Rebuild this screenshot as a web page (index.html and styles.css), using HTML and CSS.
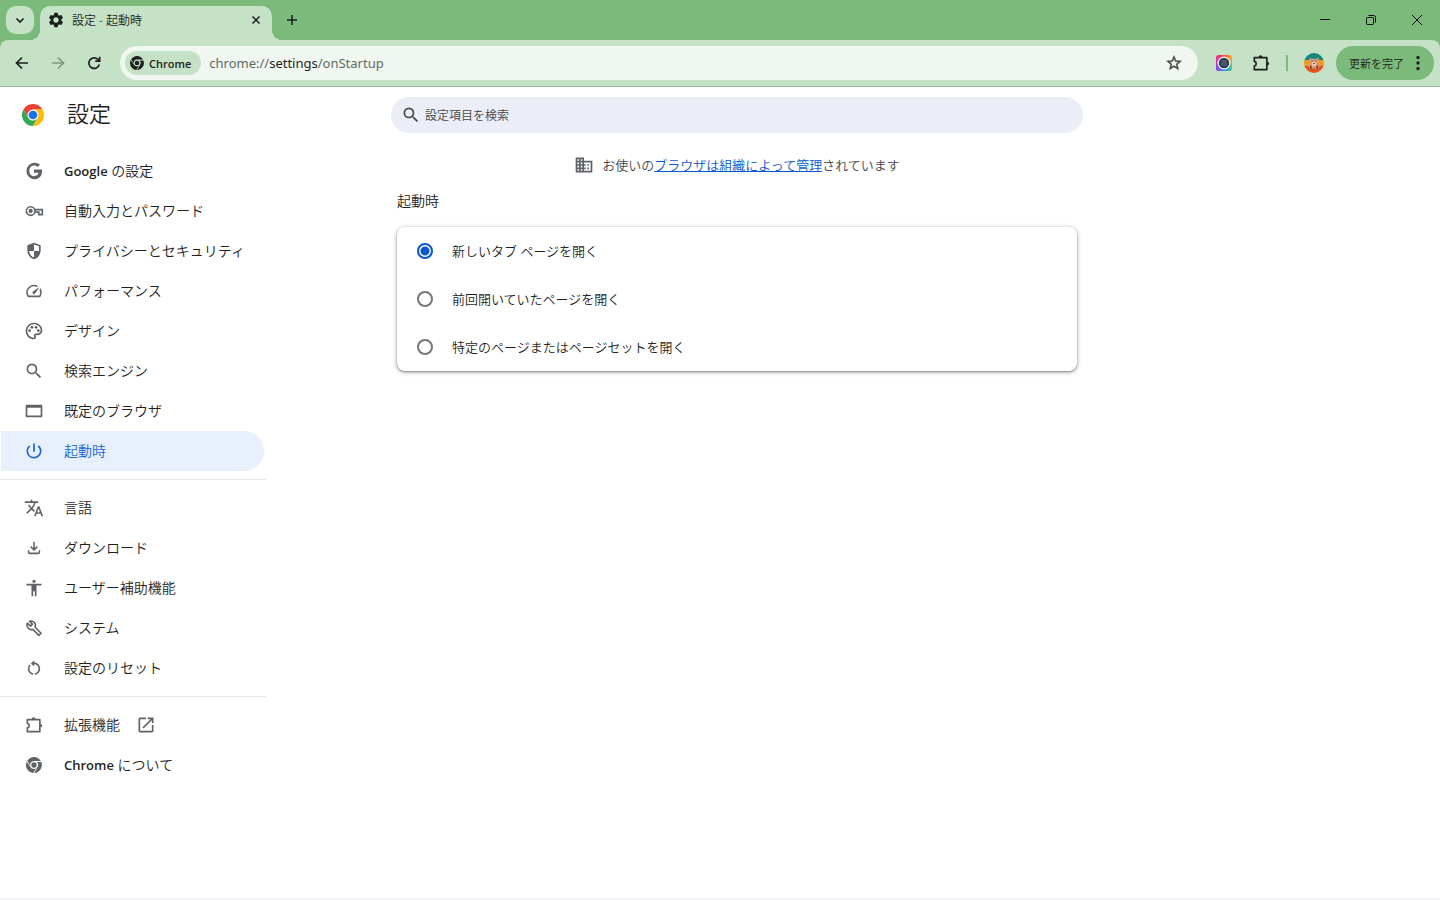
FILE: index.html
```html
<!DOCTYPE html>
<html lang="ja">
<head>
<meta charset="utf-8">
<title>設定 - 起動時</title>
<link rel="stylesheet" href="styles.css">
</head>
<body>

<!-- shared symbols -->
<svg class="defs" aria-hidden="true">
  <symbol id="chrome-mono" viewBox="0 0 24 24">
    <circle cx="12" cy="12" r="4"/>
    <path d="M12 6h10.300A12 12 0 0 0 1.900 5.600L6.700 13.600A5.500 5.500 0 0 1 12 6z"/>
    <path d="M1.100 7A12 12 0 0 0 10.900 23.950L15.300 16.600A5.700 5.700 0 0 1 6.900 15.200z"/>
    <path d="M16.200 7.500A5.900 5.900 0 0 1 17 15.400L12.400 24A12 12 0 0 0 22.900 7.500z"/>
  </symbol>
  <symbol id="extension" viewBox="0 0 24 24">
    <path d="M4 5.500h15V20H4v-4.500a2.800 2.800 0 0 0 0-5.500z" fill="none" stroke="currentColor" stroke-width="2" stroke-linejoin="round"/>
    <path d="M9.200 5a2.300 2.300 0 0 1 4.600 0zM19.500 10.400a2.300 2.300 0 0 1 0 4.600z"/>
  </symbol>
  <symbol id="search" viewBox="0 0 24 24">
    <path d="M15.500 14h-.79l-.28-.27A6.471 6.471 0 0 0 16 9.500 6.500 6.500 0 1 0 9.500 16c1.610 0 3.090-.59 4.230-1.570l.27.28v.79l5 4.990L20.490 19l-4.990-5zm-6 0C7.010 14 5 11.990 5 9.500S7.010 5 9.500 5 14 7.010 14 9.500 11.990 14 9.500 14z"/>
  </symbol>
</svg>

<header class="browser">
  <div class="tab-strip">
    <button class="tab-search" aria-label="タブを検索">
      <svg viewBox="0 0 12 12" width="12" height="12"><path d="M2.500 4.500 6 8l3.500-3.500" class="line bold"/></svg>
    </button>
    <div class="tab">
      <svg class="tab-icon" viewBox="0 0 24 24" width="18" height="18"><path d="M19.140 12.940c.04-.3.060-.61.060-.94 0-.32-.02-.64-.07-.94l2.030-1.580c.18-.14.230-.41.120-.61l-1.920-3.320c-.12-.22-.37-.29-.59-.22l-2.390.96c-.5-.38-1.030-.7-1.620-.94l-.36-2.540c-.04-.24-.24-.41-.48-.41h-3.840c-.24 0-.43.17-.47.41l-.36 2.540c-.59.24-1.130.57-1.620.94l-2.390-.96c-.22-.08-.47 0-.59.22L2.740 8.870c-.12.21-.08.47.12.61l2.030 1.580c-.05.3-.09.63-.09.94s.02.64.07.94l-2.030 1.580c-.18.14-.23.41-.12.61l1.920 3.320c.12.22.37.29.59.22l2.390-.96c.5.38 1.030.7 1.620.94l.36 2.540c.05.24.24.41.48.41h3.840c.24 0 .44-.17.47-.41l.36-2.540c.59-.24 1.130-.56 1.620-.94l2.390.96c.22.08.47 0 .59-.22l1.920-3.320c.12-.22.070-.47-.12-.61l-2.010-1.580zM12 15.600c-1.980 0-3.600-1.620-3.600-3.600s1.620-3.600 3.600-3.600 3.600 1.620 3.600 3.600-1.620 3.600-3.600 3.600z"/></svg>
      <span class="tab-title">設定 - 起動時</span>
      <button class="tab-close" aria-label="閉じる">
        <svg viewBox="0 0 10 10" width="10" height="10"><path d="M1.500 1.500l7 7M8.500 1.500l-7 7" class="line mid"/></svg>
      </button>
    </div>
    <button class="new-tab" aria-label="新しいタブ">
      <svg viewBox="0 0 12 12" width="12" height="12"><path d="M6 1v10M1 6h10" class="line mid"/></svg>
    </button>
    <div class="window-buttons">
      <button aria-label="最小化"><svg viewBox="0 0 12 12" width="12" height="12"><path d="M1 5.500h10" class="line"/></svg></button>
      <button aria-label="元に戻す"><svg viewBox="0 0 12 12" width="12" height="12"><rect x="1.500" y="3.500" width="7" height="7" rx="1" class="line"/><path d="M3.500 1.500h5a2 2 0 0 1 2 2v5" class="line"/></svg></button>
      <button aria-label="閉じる"><svg viewBox="0 0 12 12" width="12" height="12"><path d="M1 1l10 10M11 1L1 11" class="line"/></svg></button>
    </div>
  </div>

  <div class="toolbar">
    <div class="nav-buttons">
      <button aria-label="戻る"><svg viewBox="0 0 16 16" width="16" height="16"><path d="M14 8H3M8 2.500L2.500 8 8 13.500" class="line bold"/></svg></button>
      <button aria-label="進む" disabled><svg viewBox="0 0 16 16" width="16" height="16"><path d="M2 8h11M8 2.500L13.500 8 8 13.500" class="line bold"/></svg></button>
      <button aria-label="再読み込み"><svg viewBox="0 0 16 16" width="16" height="16"><path d="M13.300 9.500A5.300 5.300 0 1 1 12 4.400L13.500 5.800M13.700 1.800v4.400H9.300" class="line bold"/></svg></button>
    </div>
    <div class="omnibox">
      <button class="chip"><svg width="14" height="14"><use href="#chrome-mono"/></svg>Chrome</button>
      <span class="url">chrome://<b>settings</b>/onStartup</span>
      <button class="star" aria-label="ブックマーク"><svg viewBox="0 0 24 24" width="18" height="18"><path d="M22 9.240l-7.190-.62L12 2 9.190 8.630 2 9.240l5.460 4.730L5.820 21 12 17.270 18.180 21l-1.630-7.030L22 9.240zM12 15.400l-3.760 2.270 1-4.280-3.320-2.880 4.380-.38L12 6.100l1.710 4.040 4.380.38-3.320 2.880 1 4.280L12 15.400z" stroke="currentColor" stroke-width=".5"/></svg></button>
    </div>
    <div class="actions">
      <button aria-label="カメラ">
        <svg viewBox="0 0 16 16" width="16" height="16">
          <defs><linearGradient id="cam-top"><stop offset="0" stop-color="#e52ca4"/><stop offset=".5" stop-color="#f5473a"/><stop offset="1" stop-color="#ffb31a"/></linearGradient>
          <linearGradient id="cam-bottom"><stop offset="0" stop-color="#9c3df0"/><stop offset=".5" stop-color="#2f8df5"/><stop offset="1" stop-color="#35d48c"/></linearGradient>
          <linearGradient id="cam-fade" x1="0" y1="0" x2="0" y2="1"><stop offset=".2" stop-color="#000"/><stop offset=".8" stop-color="#fff"/></linearGradient>
          <mask id="cam-mask"><rect width="16" height="16" fill="url(#cam-fade)"/></mask></defs>
          <rect width="16" height="16" rx="3" fill="url(#cam-top)"/>
          <rect width="16" height="16" rx="3" fill="url(#cam-bottom)" mask="url(#cam-mask)"/>
          <circle cx="8" cy="8" r="6.500" fill="#fff"/><circle cx="8" cy="8" r="5.200" fill="#26384b"/><circle cx="8" cy="8" r="3.500" fill="#46566a"/>
        </svg>
      </button>
      <button aria-label="拡張機能"><svg width="20" height="20"><use href="#extension"/></svg></button>
      <span class="split"></span>
      <button class="profile" aria-label="プロフィール">
        <svg viewBox="0 0 20 20" width="20" height="20">
          <defs><clipPath id="round"><circle cx="10" cy="10" r="10"/></clipPath></defs>
          <g clip-path="url(#round)">
            <path fill="#16857b" d="M0 0h20v8H0z"/><path fill="#f29a16" d="M0 7h20v6H0z"/><path fill="#e8501e" d="M0 13h20v7H0z"/>
            <path fill="#d29b80" d="M5.500 4.500l2 1.200h5l2-1.200.3 2.500-.8 2 1.500 3-1 3.500h-9l-1-3.500 1.500-3-.8-2z"/>
            <path fill="#6b4136" d="M6 12.500h1.500V16H6zM12.500 12.500H14V16h-1.500zM7.500 7.500h1v1h-1zM11.500 7.500h1v1h-1z"/>
            <path fill="#edc5ac" d="M8 9h4v4H8z"/><path fill="#8d5447" d="M9 10h2v1H9z"/>
          </g>
        </svg>
      </button>
      <button class="update">更新を完了<svg viewBox="0 0 4 16" width="4" height="16"><circle cx="2" cy="2.500" r="1.700"/><circle cx="2" cy="8" r="1.700"/><circle cx="2" cy="13.500" r="1.700"/></svg></button>
    </div>
  </div>
</header>

<div class="settings">
  <aside class="sidebar">
    <div class="brand">
      <svg viewBox="0 0 48 48" width="22" height="22">
        <path fill="#ea4335" d="M24 12h20.800A24 24 0 0 0 3.200 12l10.400 18L24 12z"/>
        <path fill="#34a853" d="M34.400 30L24 48A24 24 0 0 1 3.200 12l10.400 18z"/>
        <path fill="#fbbc04" d="M24 12h20.800A24 24 0 0 1 24 48l10.400-18z"/>
        <circle cx="24" cy="24" r="12" fill="#fff"/><circle cx="24" cy="24" r="9.500" fill="#1a73e8"/>
      </svg>
      <h1>設定</h1>
    </div>
    <nav class="menu">
      <a href="#google"><svg viewBox="0 0 24 24"><path d="M12 5.500c1.700 0 3.200.6 4.400 1.700l2.900-2.900A10 10 0 1 0 12 22c5.800 0 9.700-4.100 9.700-9.800 0-.7-.1-1.300-.2-1.900H12v3.900h5.500c-.5 2.400-2.500 4-5.500 4a6.400 6.400 0 0 1 0-12.700z"/></svg><span><b>Google</b> の設定</span></a>
      <a href="#autofill"><svg viewBox="0 0 24 24"><circle cx="8" cy="12" r="5.200" fill="none" stroke="currentColor" stroke-width="1.900"/><circle cx="8" cy="12" r="2.600"/><path d="M13 10.300h9v6h-4.200v-3h-4.800" fill="none" stroke="currentColor" stroke-width="1.900"/></svg><span>自動入力とパスワード</span></a>
      <a href="#privacy"><svg viewBox="0 0 24 24"><path d="M12 2L4 5v6.090c0 5.050 3.410 9.760 8 10.910 4.590-1.150 8-5.860 8-10.910V5l-8-3zm6 9.090c0 .31-.01.610-.04.910H12V4.140l6 2.250v4.700zM12 19.930c-2.990-1-5.290-4.210-5.850-7.930H12v7.930z"/></svg><span>プライバシーとセキュリティ</span></a>
      <a href="#performance"><svg viewBox="-1 -1 26 26"><path d="M20.380 8.570l-1.230 1.850a8 8 0 0 1-.22 7.580H5.070A8 8 0 0 1 15.580 6.850l1.850-1.230A10 10 0 0 0 3.350 19a2 2 0 0 0 1.720 1h13.850a2 2 0 0 0 1.740-1 10 10 0 0 0-.27-10.440zm-9.790 6.840a2 2 0 0 0 2.830 0l5.660-8.490-8.490 5.660a2 2 0 0 0 0 2.830z"/></svg><span>パフォーマンス</span></a>
      <a href="#appearance"><svg viewBox="0 0 24 24"><path d="M12 22C6.490 22 2 17.510 2 12S6.490 2 12 2s10 4.040 10 9c0 3.310-2.690 6-6 6h-1.770c-.28 0-.5.220-.5.500 0 .12.050.23.130.33.410.47.640 1.060.640 1.670A2.500 2.500 0 0 1 12 22zm0-18c-4.410 0-8 3.590-8 8s3.590 8 8 8c.28 0 .5-.22.500-.5a.540.540 0 0 0-.14-.35c-.41-.46-.63-1.050-.63-1.650a2.500 2.500 0 0 1 2.500-2.500H16c2.210 0 4-1.790 4-4 0-3.860-3.590-7-8-7z"/><circle cx="6.800" cy="11.500" r="1.700"/><circle cx="9.500" cy="7.600" r="1.700"/><circle cx="14.500" cy="7.600" r="1.700"/><circle cx="17.200" cy="11.500" r="1.700"/></svg><span>デザイン</span></a>
      <a href="#search-engine"><svg><use href="#search"/></svg><span>検索エンジン</span></a>
      <a href="#default-browser"><svg viewBox="0 0 24 24"><path d="M20.500 4.500h-17c-.8 0-1.500.7-1.500 1.500v12c0 .8.700 1.500 1.500 1.500h17c.8 0 1.500-.7 1.500-1.500V6c0-.8-.7-1.500-1.500-1.500zm-.5 13H4V8.200h16v9.300z"/></svg><span>既定のブラウザ</span></a>
      <a href="#on-startup" class="selected"><svg viewBox="0 0 24 24"><path d="M13 3h-2v10h2V3zm4.830 2.170l-1.420 1.420A6.920 6.920 0 0 1 19 12c0 3.870-3.130 7-7 7A6.995 6.995 0 0 1 7.580 6.580L6.170 5.170A8.932 8.932 0 0 0 3 12a9 9 0 0 0 18 0c0-2.740-1.230-5.180-3.170-6.830z"/></svg><span>起動時</span></a>
      <hr>
      <a href="#languages"><svg viewBox="0 0 24 24"><path d="M12.870 15.070l-2.540-2.510.03-.03A17.520 17.520 0 0 0 14.070 6H17V4h-7V2H8v2H1v1.990h11.170C11.500 7.920 10.440 9.750 9 11.350 8.070 10.320 7.300 9.190 6.690 8h-2c.73 1.630 1.730 3.170 2.980 4.560l-5.090 5.020L4 19l5-5 3.110 3.110.76-2.040zM18.500 10h-2L12 22h2l1.120-3h4.750L21 22h2l-4.500-12zm-2.620 7l1.620-4.330L19.120 17h-3.240z"/></svg><span>言語</span></a>
      <a href="#downloads"><svg viewBox="-1 -1 26 26"><path d="M12 16l-5-5 1.400-1.450 2.600 2.600V4h2v8.150l2.600-2.600L17 11l-5 5zm-6 4c-1.100 0-2-.9-2-2v-3h2v3h12v-3h2v3c0 1.100-.9 2-2 2H6z"/></svg><span>ダウンロード</span></a>
      <a href="#accessibility"><svg viewBox="0 0 24 24"><path d="M12 2c1.100 0 2 .9 2 2s-.9 2-2 2-2-.9-2-2 .9-2 2-2zm9 7h-6v13h-2v-6h-2v6H9V9H3V7h18v2z"/></svg><span>ユーザー補助機能</span></a>
      <a href="#system"><svg viewBox="0 0 24 24"><path d="M4.200 6.200l3.600 3.500 2.300-2.300-3.500-3.500a5.400 5.400 0 0 1 6.700 7.200l7.200 7.200-2.700 2.600-7.200-7.200A5.400 5.400 0 0 1 4.200 6.200z" fill="none" stroke="currentColor" stroke-width="1.900" stroke-linejoin="round"/></svg><span>システム</span></a>
      <a href="#reset"><svg viewBox="-1 -1 26 26"><path d="M6 13c0-1.650.67-3.150 1.760-4.240L6.340 7.340A8.014 8.014 0 0 0 4 13c0 4.080 3.050 7.440 7 7.930v-2.020c-2.830-.48-5-2.940-5-5.910zm14 0c0-4.420-3.580-8-8-8-.06 0-.12.010-.18.010l1.090-1.090L11.500 2.500 8 6l3.500 3.500 1.410-1.410-1.080-1.080c.06 0 .12-.010.170-.010 3.310 0 6 2.690 6 6 0 2.970-2.170 5.430-5 5.910v2.020c3.950-.49 7-3.850 7-7.930z"/></svg><span>設定のリセット</span></a>
      <hr>
      <a href="#extensions"><svg><use href="#extension"/></svg><span>拡張機能</span><svg class="launch" viewBox="0 0 24 24"><path d="M19 19H5V5h7V3H5a2 2 0 0 0-2 2v14a2 2 0 0 0 2 2h14c1.100 0 2-.9 2-2v-7h-2v7zM14 3v2h3.590l-9.830 9.830 1.410 1.410L19 6.410V10h2V3h-7z"/></svg></a>
      <a href="#about"><svg class="small"><use href="#chrome-mono"/></svg><span><b>Chrome</b> について</span></a>
    </nav>
  </aside>

  <main class="content">
    <label class="search-box">
      <svg width="20" height="20"><use href="#search"/></svg>
      <input type="search" placeholder="設定項目を検索" aria-label="設定項目を検索">
    </label>
    <p class="managed">
      <svg viewBox="0 0 24 24" width="20" height="20"><path d="M12 7V3H2v18h20V7H12zM6 19H4v-2h2v2zm0-4H4v-2h2v2zm0-4H4V9h2v2zm0-4H4V5h2v2zm4 12H8v-2h2v2zm0-4H8v-2h2v2zm0-4H8V9h2v2zm0-4H8V5h2v2zm10 12h-8v-2h2v-2h-2v-2h2v-2h-2V9h8v10zm-2-8h-2v2h2v-2zm0 4h-2v2h2v-2z"/></svg>
      <span>お使いの<a href="#managed">ブラウザは組織によって管理</a>されています</span>
    </p>
    <section class="startup">
      <h2>起動時</h2>
      <div class="card">
        <label><input type="radio" name="startup" checked><span>新しいタブ ページを開く</span></label>
        <label><input type="radio" name="startup"><span>前回開いていたページを開く</span></label>
        <label><input type="radio" name="startup"><span>特定のページまたはページセットを開く</span></label>
      </div>
    </section>
  </main>
</div>

</body>
</html>
```

FILE: styles.css
```css
* {
  box-sizing: border-box;
}
body {
  margin: 0;
  min-height: 100vh;
  display: flex;
  flex-direction: column;
  background: #fff;
  border-bottom: 2px solid #f1f3f8;
  color: #1f1f1f;
  font-family: "Open Sans", "Noto Sans CJK JP", sans-serif;
  font-size: 13px;
  font-weight: 350;
}
button {
  display: flex;
  align-items: center;
  justify-content: center;
  padding: 0;
  border: 0;
  background: none;
  color: inherit;
  font: inherit;
}
svg {
  flex: none;
  fill: currentColor;
}
.defs {
  position: absolute;
  width: 0;
  height: 0;
}
.line {
  fill: none;
  stroke: currentColor;
  stroke-width: 1;
}
.mid {
  stroke-width: 1.5;
}
.bold {
  stroke-width: 1.7;
}

/* browser frame */
.browser {
  background: #7abb7c;
  border-bottom: 1px solid #9dbb9f;
}
.tab-strip {
  display: flex;
  height: 40px;
  padding: 6px 0 0 6px;
}
.tab-search {
  width: 28px;
  height: 28px;
  margin-right: 6px;
  border-radius: 10px;
  background: #c5e1c6;
}
.tab {
  position: relative;
  display: flex;
  align-items: center;
  width: 232px;
  height: 34px;
  padding: 0 10px 6px 7px;
  border-radius: 10px 10px 0 0;
  background: #c5e1c6;
}
.tab::before,
.tab::after {
  content: "";
  position: absolute;
  bottom: 0;
  width: 10px;
  height: 10px;
}
.tab::before {
  right: 100%;
  background: radial-gradient(circle at 0 0, transparent 10px, #c5e1c6 10px);
}
.tab::after {
  left: 100%;
  background: radial-gradient(circle at 100% 0, transparent 10px, #c5e1c6 10px);
}
.tab-title {
  flex: 1;
  margin-left: 7px;
  font-size: 12px;
}
.tab-close {
  width: 12px;
  height: 12px;
}
.new-tab {
  width: 28px;
  height: 28px;
  margin-left: 6px;
}
.window-buttons {
  display: flex;
  height: 28px;
  margin-left: auto;
}
.window-buttons button {
  width: 46px;
  color: #000;
}
.toolbar {
  display: flex;
  align-items: center;
  height: 46px;
  padding: 0 6px;
  border-radius: 8px 8px 0 0;
  background: #c5e1c6;
}
.nav-buttons {
  display: flex;
  gap: 20px;
  padding: 0 18px 0 8px;
}
.nav-buttons button:disabled {
  color: #7f9a81;
}
.omnibox {
  flex: 1;
  display: flex;
  align-items: center;
  height: 34px;
  padding: 0 15px 0 5px;
  border-radius: 17px;
  background: #f0f7f0;
}
.chip {
  gap: 5px;
  height: 24px;
  padding: 0 10px 0 5px;
  border-radius: 12px;
  background: #c5e1c6;
  font-size: 11px;
  font-weight: 600;
}
.url {
  flex: 1;
  margin-left: 8px;
  color: #5f6b60;
  font-family: "Noto Sans", sans-serif;
  font-weight: 400;
}
.url b {
  color: #1f1f1f;
  font-weight: 400;
}
.star {
  color: #474747;
}
.actions {
  display: flex;
  align-items: center;
  padding-left: 18px;
}
.actions button + button {
  margin-left: 19px;
}
.split {
  width: 2px;
  height: 16px;
  margin: 0 16px 0 15px;
  background: #7abb7c;
}
.actions .update {
  gap: 12px;
  height: 34px;
  margin-left: 12px;
  padding: 0 14px 0 13px;
  border-radius: 17px;
  background: #7abb7c;
  font-size: 11px;
}

/* settings page */
.settings {
  flex: 1;
  display: grid;
  grid-template-columns: 266px 1fr 232px;
}
.brand {
  display: flex;
  align-items: center;
  gap: 23px;
  height: 56px;
  padding-left: 22px;
}
.brand h1 {
  margin: 0;
  padding-bottom: 4px;
  font-size: 22px;
  font-weight: 350;
  line-height: 32px;
}
.menu {
  padding-top: 8px;
}
.menu a {
  display: flex;
  align-items: center;
  height: 40px;
  margin: 0 2px 0 1px;
  padding-left: 23px;
  border-radius: 0 20px 20px 0;
  color: #1f1f1f;
  font-size: 14px;
  text-decoration: none;
}
.menu span,
.managed span,
.card span {
  padding-bottom: 2px;
}
.menu b {
  font-size: 13px;
  font-weight: 600;
}
.menu svg {
  width: 20px;
  height: 20px;
  margin-right: 20px;
  color: #5f6368;
}
.menu .small {
  width: 16px;
  height: 16px;
  margin: 0 22px 0 2px;
}
.menu .launch {
  margin: 0 0 0 16px;
}
.menu .selected {
  background: #e8f0fe;
  color: #1967d2;
}
.menu .selected svg {
  color: #1967d2;
}
.menu hr {
  height: 1px;
  margin: 8px 0;
  border: 0;
  background: #e4e6e9;
}
.content {
  display: flex;
  flex-direction: column;
  align-items: center;
  padding-top: 10px;
}
.search-box {
  display: flex;
  align-items: center;
  gap: 4px;
  width: 100%;
  max-width: 692px;
  height: 36px;
  padding: 0 10px;
  border-radius: 18px;
  background: #ebeef7;
  color: #474747;
}
.search-box input {
  flex: 1;
  padding: 0;
  border: 0;
  outline: 0;
  background: none;
  font: inherit;
  font-size: 12px;
}
.search-box input::placeholder {
  color: #474747;
}
.managed {
  display: flex;
  align-items: center;
  gap: 8px;
  height: 20px;
  margin: 22px 0 0;
  color: #474747;
}
.managed svg {
  color: #5f6368;
}
.managed a {
  color: #0b57d0;
}
.startup {
  width: 100%;
  max-width: 680px;
}
.startup h2 {
  margin: 16px 0;
  font-size: 14px;
  font-weight: 350;
  line-height: 20px;
}
.card {
  border-radius: 8px;
  background: #fff;
  box-shadow: 0 1px 2px rgba(60, 64, 67, .5), 0 1px 4px 1px rgba(60, 64, 67, .25);
}
.card label {
  display: flex;
  align-items: center;
  height: 48px;
  padding-left: 20px;
}
.card input {
  appearance: none;
  width: 16px;
  height: 16px;
  margin: 0 19px 0 0;
  border: 2px solid #747775;
  border-radius: 50%;
}
.card input:checked {
  border-color: #0b57d0;
  background: radial-gradient(circle, #0b57d0 4px, transparent 5px);
}
```
